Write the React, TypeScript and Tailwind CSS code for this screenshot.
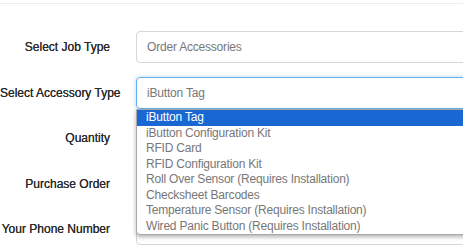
const rows = [
  { label: "Select Job Type", value: "Order Accessories", focus: false },
  { label: "Select Accessory Type", value: "iButton Tag", focus: true },
  { label: "Quantity", value: "", focus: false },
  { label: "Purchase Order", value: "", focus: false },
  { label: "Your Phone Number", value: "", focus: false },
];

const options = [
  "iButton Tag",
  "iButton Configuration Kit",
  "RFID Card",
  "RFID Configuration Kit",
  "Roll Over Sensor (Requires Installation)",
  "Checksheet Barcodes",
  "Temperature Sensor (Requires Installation)",
  "Wired Panic Button (Requires Installation)",
];

export default function App() {
  return (
    <div className="relative w-[463px] h-[245px] overflow-hidden bg-white font-['Liberation_Sans',sans-serif]">
      <div className="h-[4px] border-b border-[#ececec]" />

      {/* Form */}
      <div className="flex flex-col gap-[13.5px] pt-[27px]">
        {rows.map((r) => (
          <div key={r.label} className="flex items-center">
            <label className="w-[110px] shrink-0 text-right text-[12px] text-[#2b2b2b] whitespace-nowrap [text-shadow:0_0_0.4px_#2b2b2b]">
              {r.label}
            </label>
            <div
              className={
                "ml-[26px] h-[32px] w-[360px] shrink-0 rounded-[4px] border px-[10px] flex items-center text-[12px] text-[#777] tracking-[-0.2px] " +
                (r.focus
                  ? "border-[#66afe9] shadow-[0_0_4px_rgba(102,175,233,0.5)]"
                  : "border-[#d6d6d6]")
              }
            >
              {r.value}
            </div>
          </div>
        ))}
      </div>

      {/* Open select list */}
      <div className="absolute left-[136px] top-[109px] w-[360px] bg-white border border-[#a8a8a8] rounded-b-[4px] shadow-[0_2px_4px_rgba(0,0,0,0.3)] text-[12px] tracking-[-0.2px]">
        {options.map((o, i) => (
          <div
            key={o}
            className={
              "h-[15.5px] leading-[15.5px] pl-[9px] whitespace-nowrap " +
              (i === 0 ? "bg-[#1967d2] text-white" : "text-[#777]")
            }
          >
            {o}
          </div>
        ))}
      </div>
    </div>
  );
}
